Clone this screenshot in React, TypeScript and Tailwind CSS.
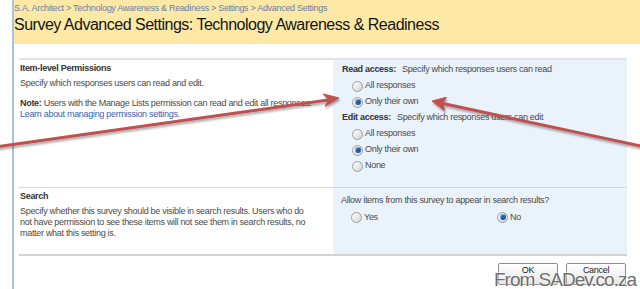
const Radio = ({ checked }: { checked?: boolean }) => (
  <span className="inline-flex h-[11px] w-[11px] shrink-0 items-center justify-center rounded-full border border-[#9c9c9c] bg-linear-to-br from-white to-[#d4d4d4]">
    {checked && <span className="h-[6px] w-[6px] rounded-full bg-[#1c5ca6] shadow-[inset_1px_1px_1px_#7fb2ea]" />}
  </span>
);

const Option = ({ label, checked }: { label: string; checked?: boolean }) => (
  <div className="flex h-[16px] items-center gap-[2px] pl-[10px]">
    <Radio checked={checked} />
    <span>{label}</span>
  </div>
);

export default function App() {
  return (
    <div className="relative h-[289px] w-[640px] overflow-hidden bg-white pl-[12px] font-['Liberation_Sans',Arial,sans-serif] text-[9px] tracking-[-0.3px] text-[#4a4a4a]">
      <div className="h-full border-l-2 border-[#a3c2ee]">
        <div className="h-[44px] bg-[#fde8a6] pt-[3px]">
          <div className="leading-[11px] text-[#6a7fa6]">
            S.A. Architect &gt; Technology Awareness &amp; Readiness &gt; Settings &gt; Advanced Settings
          </div>
          <h1 className="mt-[1px] text-[16px] leading-[20px] tracking-[-0.5px] text-[#151515]">
            Survey Advanced Settings: Technology Awareness &amp; Readiness
          </h1>
        </div>

        <div className="mr-[13px] ml-[5px] mt-[14px]">
          <div className="flex h-[129px] border-t-2 border-[#e2e2e2]">
            <div className="w-[314px] pl-[1px] pt-[3px] leading-[11px]">
              <div className="font-bold text-[#333]">Item-level Permissions</div>
              <div className="mt-[4px]">Specify which responses users can read and edit.</div>
              <div className="mt-[9px]">
                <span className="font-bold text-[#333]">Note:</span> Users with the Manage Lists permission can read and edit all responses.
              </div>
              <div className="text-[#3b62ad]">Learn about managing permission settings.</div>
            </div>
            <div className="flex-1 bg-[#eaf2fc] pl-[9px] pt-[2px]">
              <div className="flex h-[16px] items-center">
                <span className="font-bold text-[#333]">Read access:</span>
                <span className="ml-[6px]">Specify which responses users can read</span>
              </div>
              <Option label="All responses" />
              <Option label="Only their own" checked />
              <div className="flex h-[16px] items-center">
                <span className="font-bold text-[#333]">Edit access:</span>
                <span className="ml-[6px]">Specify which responses users can edit</span>
              </div>
              <Option label="All responses" />
              <Option label="Only their own" checked />
              <Option label="None" />
            </div>
          </div>

          <div className="flex h-[67px] border-t border-[#d8d8d8]">
            <div className="w-[314px] pl-[1px] pt-[3px] leading-[11px]">
              <div className="font-bold text-[#333]">Search</div>
              <div className="mt-[4px]">
                Specify whether this survey should be visible in search results. Users who do
                <br />
                not have permission to see these items will not see them in search results, no
                <br />
                matter what this setting is.
              </div>
            </div>
            <div className="flex-1 bg-[#eaf2fc] pl-[8px] pt-[7px] leading-[11px]">
              <div>Allow items from this survey to appear in search results?</div>
              <div className="mt-[3px] flex">
                <div className="w-[146px]">
                  <Option label="Yes" />
                </div>
                <Option label="No" checked />
              </div>
            </div>
          </div>

          <div className="border-t-2 border-[#d4d4d4]" />

          <div className="mt-[7px] flex justify-end gap-[8px] pr-[1px]">
            <button className="h-[22px] w-[60px] rounded-[2px] border border-[#8c8c8c] bg-linear-to-b from-white to-[#e6e6e6] pb-[6px] text-[#222]">
              OK
            </button>
            <button className="h-[22px] w-[60px] rounded-[2px] border border-[#8c8c8c] bg-linear-to-b from-white to-[#e6e6e6] pb-[6px] text-[#222]">
              Cancel
            </button>
          </div>
        </div>
      </div>

      <svg className="pointer-events-none absolute inset-0" width="640" height="289" viewBox="0 0 640 289">
        <defs>
          <filter id="sh" x="-10%" y="-50%" width="120%" height="200%">
            <feDropShadow dx="1" dy="2" stdDeviation="1" floodColor="#000" floodOpacity="0.35" />
          </filter>
        </defs>
        <g filter="url(#sh)" fill="#c0504d" stroke="#c0504d">
          <line x1="-5" y1="147" x2="328" y2="100" strokeWidth="3" />
          <polygon points="339,98 325.1,106.3 328.7,99.6 323.3,93.9" strokeWidth="1" strokeLinejoin="round" />
          <line x1="645" y1="147" x2="443" y2="103.5" strokeWidth="3" />
          <polygon points="432,101 446.3,97.3 442.8,103.1 444.4,110.5" strokeWidth="1" strokeLinejoin="round" />
        </g>
      </svg>

      <div className="pointer-events-none absolute bottom-[-3px] right-[4px] text-[19px] leading-[24px] tracking-[-1px] text-[#6e6e6e] [text-shadow:0_0_2px_#fff,0_0_2px_#fff]">
        From SADev.co.za
      </div>
    </div>
  );
}
